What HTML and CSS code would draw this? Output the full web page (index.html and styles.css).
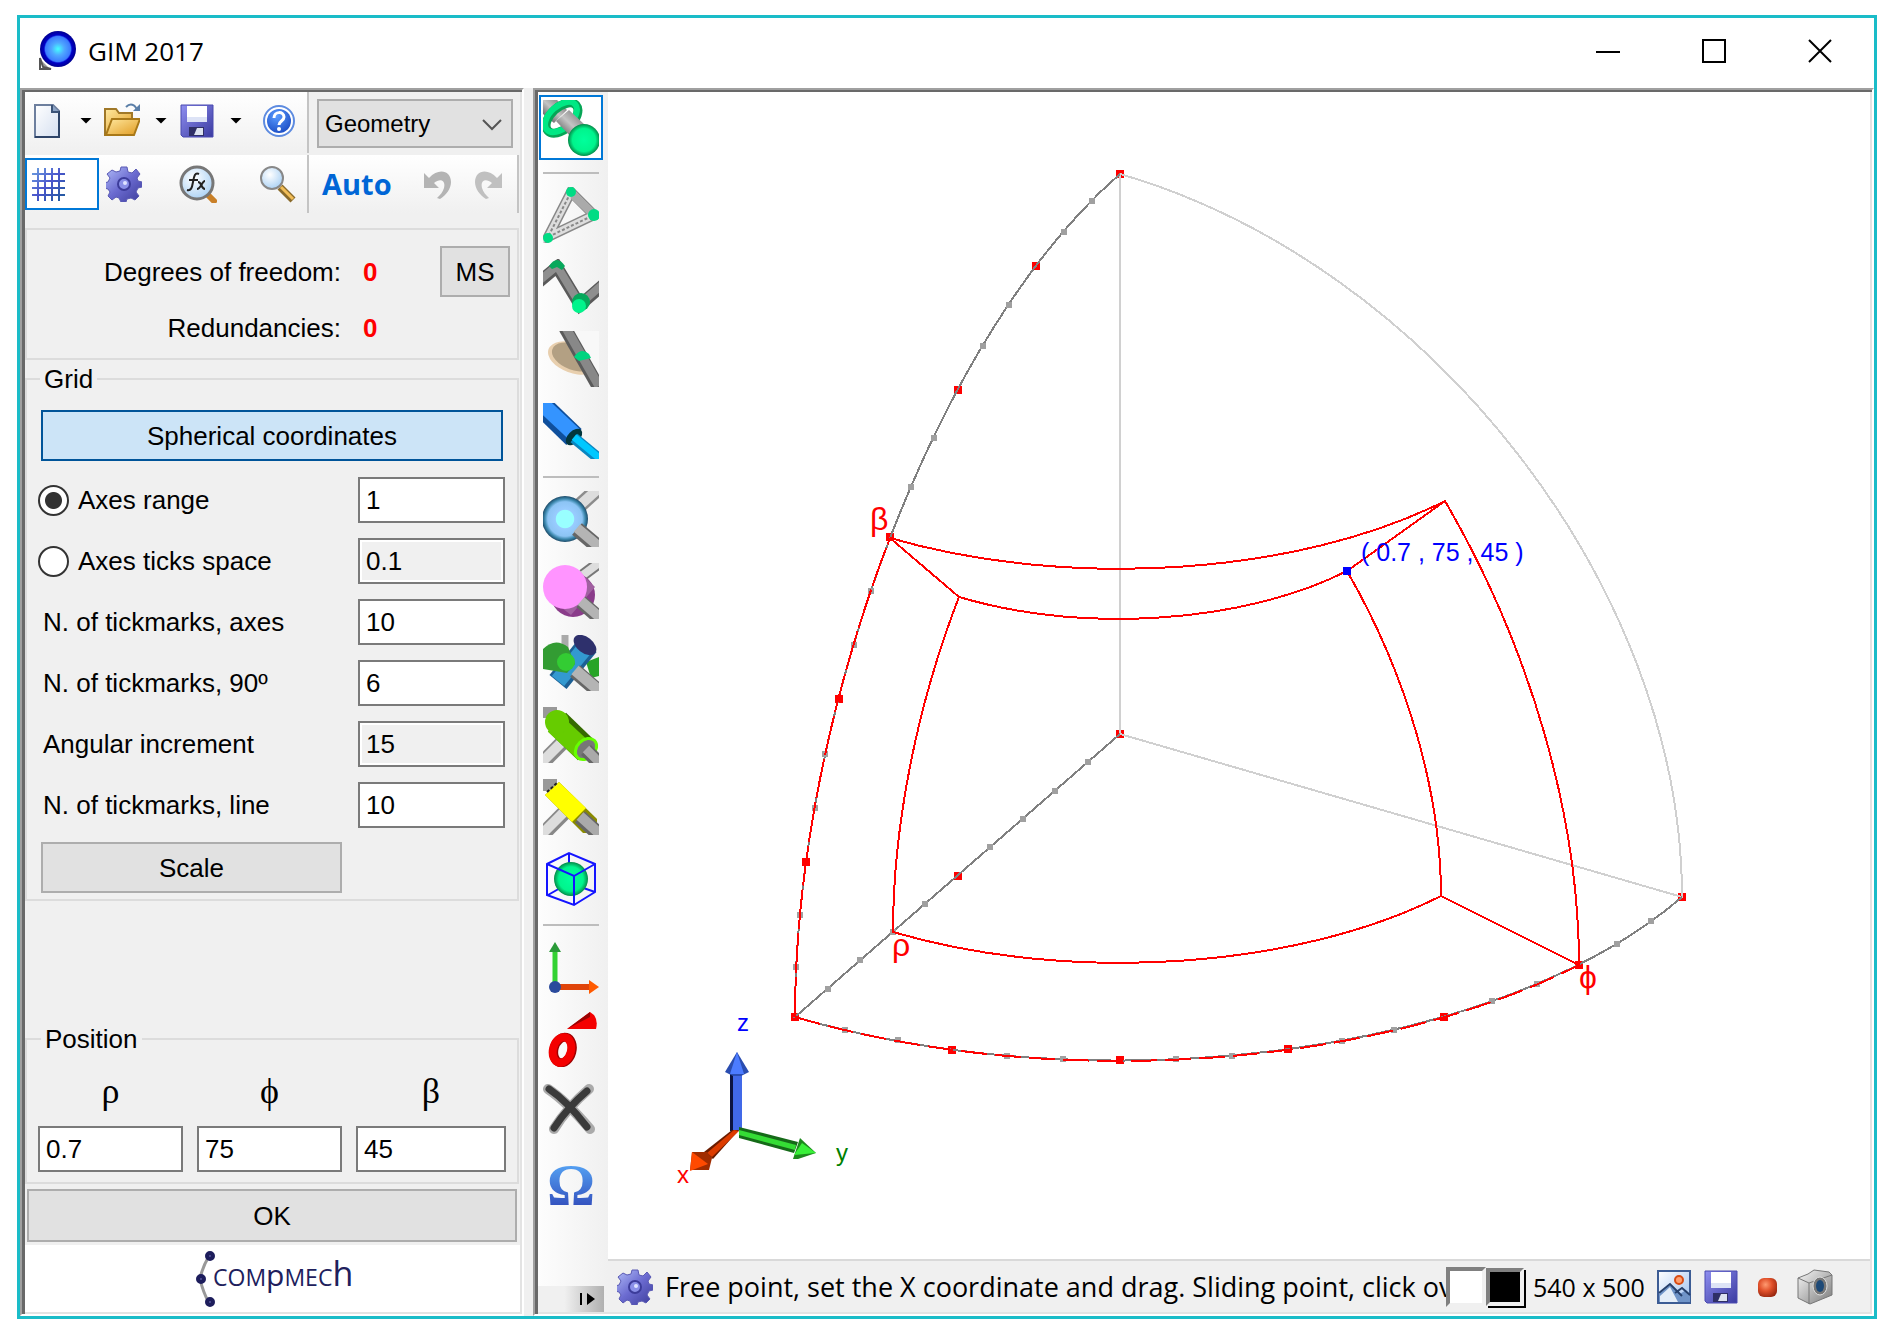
FILE: index.html
```html
<!DOCTYPE html>
<html lang="en">
<head>
<meta charset="utf-8">
<title>GIM 2017</title>
<link rel="stylesheet" href="styles.css">
</head>
<body>
<svg class="defs" aria-hidden="true">
  <defs>
    <linearGradient id="rod" gradientUnits="objectBoundingBox" x1="0.2" y1="0.8" x2="0.8" y2="0.2"><stop offset="0" stop-color="#707070"/><stop offset=".5" stop-color="#c4c4c4"/><stop offset="1" stop-color="#8c8c8c"/></linearGradient>
    <linearGradient id="floppy" x1="0" y1="0" x2="1" y2="1"><stop offset="0" stop-color="#8f8ff0"/><stop offset="1" stop-color="#3a3aa0"/></linearGradient>
    <linearGradient id="folder" x1="0" y1="0" x2="1" y2="1"><stop offset="0" stop-color="#ffe9a0"/><stop offset="1" stop-color="#e09a20"/></linearGradient>
    <linearGradient id="paper" x1="0" y1="0" x2="1" y2="1"><stop offset="0" stop-color="#fff"/><stop offset="1" stop-color="#d5dff0"/></linearGradient>
    <linearGradient id="gearfill" x1="0" y1="0" x2="1" y2="1"><stop offset="0" stop-color="#b4c0fa"/><stop offset=".5" stop-color="#6b6bd0"/><stop offset="1" stop-color="#3c3c9a"/></linearGradient>
    <linearGradient id="gridline" gradientUnits="userSpaceOnUse" x1="2" y1="2" x2="34" y2="34"><stop offset="0" stop-color="#6da3e0"/><stop offset=".5" stop-color="#4a55cc"/><stop offset="1" stop-color="#1f5a9c"/></linearGradient>
    <radialGradient id="lens" cx=".4" cy=".35" r=".7"><stop offset="0" stop-color="#fff"/><stop offset="1" stop-color="#a8d0f4"/></radialGradient>
    <radialGradient id="help" cx=".4" cy=".3" r=".8"><stop offset="0" stop-color="#5b9cff"/><stop offset="1" stop-color="#1747c0"/></radialGradient>
    <radialGradient id="app"><stop offset="0" stop-color="#4ff"/><stop offset=".35" stop-color="#4fa8ff"/><stop offset=".7" stop-color="#3c7cff"/><stop offset=".78" stop-color="#0000c8"/><stop offset="1" stop-color="#000090"/></radialGradient>
    <radialGradient id="green"><stop offset="0" stop-color="#00ff9c"/><stop offset=".72" stop-color="#00f48c"/><stop offset="1" stop-color="#048a48"/></radialGradient>
    <radialGradient id="sky"><stop offset="0" stop-color="#9ff"/><stop offset=".38" stop-color="#9ff"/><stop offset=".42" stop-color="#9cf"/><stop offset=".75" stop-color="#8cc4f4"/><stop offset=".88" stop-color="#3b87ac"/><stop offset="1" stop-color="#1d4a68"/></radialGradient>
    <radialGradient id="ball" cx=".4" cy=".35" r=".7"><stop offset="0" stop-color="#ff9a70"/><stop offset=".5" stop-color="#e0502a"/><stop offset="1" stop-color="#9a2810"/></radialGradient>
    <linearGradient id="picture" x1="0" y1="0" x2="1" y2="1"><stop offset="0" stop-color="#fff"/><stop offset="1" stop-color="#9cc0f0"/></linearGradient>
    <linearGradient id="camera" x1="0" y1="0" x2="1" y2="1"><stop offset="0" stop-color="#f8f8f8"/><stop offset="1" stop-color="#7a7a7a"/></linearGradient>
    <symbol id="gear" viewBox="0 0 36 36">
      <path fill="url(#gearfill)" stroke="#5a5ab4" d="M15 1h6l1 5 4 1 4-4 4 5-3 4 1 3 4 1v5l-4 1-2 4 3 4-4 4-4-2-4 1-1 3h-5l-2-4-3-1-4 3-4-4 2-4-2-3-4-1v-5l4-1 2-4-3-4 5-4 4 2 4-1z"/>
      <circle cx="18" cy="18" r="6" fill="#8a90e8" stroke="#3c3c9a" stroke-width="2"/><circle cx="19" cy="17" r="2" fill="#dfe4ff"/>
    </symbol>
    <symbol id="save" viewBox="0 0 36 36">
      <path fill="url(#floppy)" stroke="#4a4ab0" d="M2 2h32v32H4l-2-2z"/><path fill="#fff" d="M8 3h20v16H8z"/><path fill="#dde3f6" d="M8 14h20v5H8z"/><path fill="#2f2f66" d="M10 24h15v9H10z"/><path fill="#dde3f0" d="M18 25h6v7h-9z"/>
    </symbol>
  </defs>
</svg>

<main class="window">
  <header class="titlebar">
    <svg class="app-icon" viewBox="0 0 40 40"><path d="M1 27v12h12z" fill="#999"/><path d="M2 27v11h11l-8-2z" fill="#fff" stroke="#555" stroke-width="2"/><circle cx="20" cy="18" r="18" fill="url(#app)"/></svg>
    <h1 class="title">GIM 2017</h1>
    <div class="window-controls">
      <button type="button" aria-label="Minimize"><svg viewBox="0 0 24 24"><path d="M0 13h24" stroke="#000" stroke-width="2"/></svg></button>
      <button type="button" aria-label="Maximize"><svg viewBox="0 0 24 24"><path d="M1 1h22v22H1z" fill="none" stroke="#000" stroke-width="2"/></svg></button>
      <button type="button" aria-label="Close"><svg viewBox="0 0 24 24"><path d="M1 1l22 22M23 1L1 23" stroke="#000" stroke-width="2"/></svg></button>
    </div>
  </header>

  <div class="workspace">
    <aside class="sidebar sunken">
      <div class="toolrow">
        <div class="strip strip-main">
          <button class="tool" type="button" aria-label="New"><svg viewBox="0 0 36 36"><path d="M6 2h18l6 6v26H6z" fill="url(#paper)" stroke="#6d7f9e" stroke-width="2"/><path d="M30 8v26H6" fill="none" stroke="#2e4468" stroke-width="2"/><path d="M23 2v7h7" fill="#8ba3c6" stroke="#3c5478" stroke-width="2"/></svg></button>
          <button class="caret" type="button" aria-label="New options"></button>
          <button class="tool" type="button" aria-label="Open"><svg viewBox="0 0 36 36"><path d="M1 6h11l3 4h13v22H1z" fill="url(#folder)" stroke="#a07828" stroke-width="2"/><path d="M8 16h28l-6 16H2z" fill="url(#folder)" stroke="#a87818" stroke-width="2"/><path d="M22 4c4-4 9-3 11 3" fill="none" stroke="#5b7fa8" stroke-width="2"/><path d="M29 8h7V1z" fill="#5b7fa8"/></svg></button>
          <button class="caret" type="button" aria-label="Open options"></button>
          <button class="tool" type="button" aria-label="Save"><svg viewBox="0 0 36 36"><use href="#save"/></svg></button>
          <button class="caret" type="button" aria-label="Save options"></button>
          <button class="tool tool-help" type="button" aria-label="Help"><svg viewBox="0 0 36 36"><circle cx="18" cy="18" r="15" fill="#fff" stroke="#5d8be0" stroke-width="2"/><circle cx="18" cy="18" r="12" fill="url(#help)"/><path d="M13 15c0-7 10-7 10-1 0 4-5 4-5 8" fill="none" stroke="#fff" stroke-width="3"/><circle cx="18" cy="26" r="2" fill="#fff"/></svg></button>
        </div>
        <div class="combo">
          <select aria-label="Mode"><option>Geometry</option></select>
          <svg class="chevron" viewBox="0 0 20 12"><path d="M1 1l9 9 9-9" fill="none" stroke="#555" stroke-width="2"/></svg>
        </div>
      </div>
      <div class="toolrow toolrow-second">
        <div class="strip strip-main">
          <button class="tool grid-toggle" type="button" aria-label="Grid" aria-pressed="true"><svg viewBox="0 0 36 36"><path d="M8 2v33M15 2v33M22 2v33M29 2v33M2 8h33M2 15h33M2 22h33M2 29h33" stroke="url(#gridline)" stroke-width="2"/></svg></button>
          <button class="tool tool-gear" type="button" aria-label="Settings"><svg viewBox="0 0 36 36"><use href="#gear"/></svg></button>
          <button class="tool tool-fx" type="button" aria-label="Functions"><svg viewBox="0 0 38 38"><path d="M28 29l7 7" stroke="#c98028" stroke-width="6" stroke-linecap="round"/><circle cx="18" cy="18" r="16" fill="url(#lens)" stroke="#777" stroke-width="3"/><path d="M20 9c-4-2-5 2-6 8s-2 9-6 8M10 15h9M19 17c4 0 3 7 7 7M26 16c-3 0-4 8-8 8" fill="none" stroke="#222" stroke-width="2"/></svg></button>
          <button class="tool tool-zoom" type="button" aria-label="Zoom"><svg viewBox="0 0 38 38"><path d="M22 22l13 13" stroke="#8a6a2a" stroke-width="7"/><path d="M23 22l12 12" stroke="#f2bd58" stroke-width="3"/><circle cx="14" cy="13" r="11" fill="url(#lens)" stroke="#888" stroke-width="2"/></svg></button>
        </div>
        <div class="strip strip-edit">
          <button class="auto" type="button">Auto</button>
          <button class="tool" type="button" aria-label="Undo" disabled><svg viewBox="0 0 32 32"><path d="M2 5v15h15l-5-5c6-5 12-3 10 5-1 4-4 7-7 10l3 1c6-4 11-10 11-17C29 3 17-1 7 10z" fill="#b4b4b4"/></svg></button>
          <button class="tool" type="button" aria-label="Redo" disabled><svg viewBox="0 0 32 32"><path d="M30 5v15H15l5-5c-6-5-12-3-10 5 1 4 4 7 7 10l-3 1C8 27 3 21 3 14 3 3 15-1 25 10z" fill="#c0c0c0"/></svg></button>
        </div>
      </div>

      <section class="stats">
        <div class="stat"><span class="stat-name">Degrees of freedom:</span><output class="stat-value">0</output><button class="push ms" type="button">MS</button></div>
        <div class="stat"><span class="stat-name">Redundancies:</span><output class="stat-value">0</output></div>
      </section>

      <fieldset class="group grid-group">
        <legend>Grid</legend>
        <button class="push push-active" type="button" aria-pressed="true">Spherical coordinates</button>
        <div class="rows">
          <div class="row"><label class="choice"><input type="radio" name="axes" checked>Axes range</label><input class="field" type="text" value="1" aria-label="Axes range value"></div>
          <div class="row"><label class="choice"><input type="radio" name="axes">Axes ticks space</label><input class="field" type="text" value="0.1" readonly aria-label="Axes ticks space value"></div>
          <div class="row"><label class="name" for="t-axes">N. of tickmarks, axes</label><input class="field" id="t-axes" type="text" value="10"></div>
          <div class="row"><label class="name" for="t-90">N. of tickmarks, 90º</label><input class="field" id="t-90" type="text" value="6"></div>
          <div class="row"><label class="name" for="t-ang">Angular increment</label><input class="field" id="t-ang" type="text" value="15" readonly></div>
          <div class="row"><label class="name" for="t-line">N. of tickmarks, line</label><input class="field" id="t-line" type="text" value="10"></div>
        </div>
        <button class="push scale" type="button">Scale</button>
      </fieldset>

      <fieldset class="group position-group">
        <legend>Position</legend>
        <div class="coords">
          <label>ρ<input class="field" type="text" value="0.7"></label>
          <label>ϕ<input class="field" type="text" value="75"></label>
          <label>β<input class="field" type="text" value="45"></label>
        </div>
      </fieldset>
      <button class="push ok" type="button">OK</button>
      <div class="brand">
        <svg viewBox="0 0 24 58"><path d="M16 6Q9 18 7 29Q10 42 16 53" fill="none" stroke="#999" stroke-width="3"/><g fill="#55559a" stroke="#1d1d5c" stroke-width="4"><circle cx="17" cy="6" r="3"/><circle cx="8" cy="29" r="3"/><circle cx="17" cy="52" r="3"/></g></svg>
        <span class="brand-name">COM<span class="brand-p">p</span>MEC<span class="brand-h">h</span></span>
      </div>
    </aside>

    <section class="stage sunken">
      <nav class="palette" aria-label="Elements">
        <button class="selected" type="button" aria-label="Node"><svg viewBox="0 0 56 56"><path d="M0 0h14l10 10-13 13L0 14z" fill="url(#rod)"/><ellipse cx="19" cy="18" rx="19" ry="11" transform="rotate(-42 19 18)" fill="none" stroke="#06a556" stroke-width="9"/><ellipse cx="18" cy="17" rx="19" ry="11" transform="rotate(-42 18 17)" fill="none" stroke="#00e884" stroke-width="6"/><path d="M13 21l13-11 16 15-13 13z" fill="url(#rod)"/><circle cx="41" cy="40" r="16" fill="url(#green)"/></svg></button>
        <hr>
        <button type="button" aria-label="Ternary element"><svg viewBox="0 0 56 56"><path d="M28 5l23 23L5 50z" fill="none" stroke="#888" stroke-width="10"/><path d="M28 5l23 23L5 50z" fill="none" stroke="#ddd" stroke-width="7"/><path d="M28 5l23 23L5 50z" fill="none" stroke="#888" stroke-width="2" stroke-dasharray="3 2"/><path d="M30 8l19 18" stroke="#aaa" stroke-width="8"/><circle cx="28" cy="5" r="5" fill="#00dc84"/><circle cx="51" cy="28" r="6" fill="#00dc84"/><circle cx="5" cy="51" r="5" fill="#00dc84"/></svg></button>
        <button type="button" aria-label="Binary element"><svg viewBox="0 0 56 56"><path d="M-4 23L14 8l23 38 23-20" fill="none" stroke="#5a5a5a" stroke-width="12"/><path d="M-4 22L14 7l23 38 23-20" fill="none" stroke="#8e8e8e" stroke-width="8"/><path d="M6 7q8-12 16 0l-3 4-5-3-5 2z" fill="#07a85c"/><circle cx="38" cy="43" r="9" fill="#07a85c"/><circle cx="36" cy="47" r="7" fill="#00f48c"/></svg></button>
        <button type="button" aria-label="Disc element"><svg viewBox="0 0 56 56"><ellipse cx="30" cy="27" rx="26" ry="15" transform="rotate(20 30 27)" fill="#e8cfae"/><ellipse cx="31" cy="26" rx="23" ry="13" transform="rotate(20 31 26)" fill="#b3a083"/><path d="M26 0h30v46z" fill="#f8f8f8"/><path d="M22 -3l34 60" stroke="#5a5a5a" stroke-width="13"/><path d="M23 -3l33 58" stroke="#888" stroke-width="9"/><path d="M31 26q7-10 15-3l2 4-12 3z" fill="#00d480"/></svg></button>
        <button type="button" aria-label="Actuator"><svg viewBox="0 0 56 56"><path d="M-2 2l33 32" stroke="#0f4f9c" stroke-width="22"/><path d="M-2 0l33 31" stroke="#3494ff" stroke-width="15"/><ellipse cx="31" cy="34" rx="10" ry="6" transform="rotate(-45 31 34)" fill="#03363c"/><path d="M31 35l29 24" stroke="#0a86c0" stroke-width="11"/><path d="M31 34l29 24" stroke="#00c8ff" stroke-width="7"/></svg></button>
        <hr>
        <button type="button" aria-label="Spherical joint"><svg viewBox="0 0 56 56"><path d="M56 -3L36 15" stroke="#8c8c8c" stroke-width="15"/><path d="M56 -3L36 15" stroke="#ddd" stroke-width="10"/><circle cx="22" cy="28" r="23" fill="url(#sky)"/><path d="M34 38l26 22" stroke="#666" stroke-width="15"/><path d="M34 37l26 22" stroke="#b4b4b4" stroke-width="10"/></svg></button>
        <button type="button" aria-label="Planar joint"><svg viewBox="0 0 56 56"><path d="M56 0L40 12" stroke="#777" stroke-width="12"/><path d="M56 0L40 12" stroke="#ddd" stroke-width="8"/><circle cx="30" cy="32" r="22" fill="#8a3c8a"/><path d="M10 38l28-28 14 14-24 28z" fill="#a060a0"/><circle cx="22" cy="24" r="22" fill="#ff94ff"/><path d="M38 39l22 19" stroke="#666" stroke-width="14"/><path d="M38 38l22 19" stroke="#b4b4b4" stroke-width="10"/></svg></button>
        <button type="button" aria-label="Universal joint"><svg viewBox="0 0 56 56"><path d="M22 0v14" stroke="#aaa" stroke-width="7"/><path d="M43 27l13-5v19l-8 2z" fill="#28a428"/><path d="M45 10L15 47" stroke="#1c5f94" stroke-width="22"/><path d="M42 13L15 46" stroke="#3399d0" stroke-width="16"/><ellipse cx="42" cy="10" rx="13" ry="8" transform="rotate(38 42 10)" fill="#2e306c"/><path d="M0 14q12-12 25-2l7 17-8 9-24-4z" fill="#339c33"/><circle cx="23" cy="27" r="9" fill="#33cc33"/><path d="M32 36l28 24" stroke="#666" stroke-width="15"/><path d="M32 35l28 24" stroke="#b4b4b4" stroke-width="11"/></svg></button>
        <button type="button" aria-label="Cylindrical joint"><svg viewBox="0 0 56 56"><path d="M-2 4h16" stroke="#999" stroke-width="14"/><path d="M-3 58l26-26" stroke="#888" stroke-width="15"/><path d="M-3 57l26-26" stroke="#ddd" stroke-width="10"/><path d="M14 15l30 29" stroke="#356b00" stroke-width="26"/><path d="M12 17l30 28" stroke="#66cc00" stroke-width="21"/><circle cx="14" cy="15" r="12" fill="#66cc00"/><ellipse cx="43" cy="42" rx="12" ry="9" transform="rotate(-45 43 42)" fill="#777" stroke="#66ff00" stroke-width="3"/><path d="M43 43l16 16" stroke="#666" stroke-width="14"/><path d="M43 42l16 16" stroke="#aaa" stroke-width="9"/></svg></button>
        <button type="button" aria-label="Prismatic joint"><svg viewBox="0 0 56 56"><path d="M-2 5h16" stroke="#999" stroke-width="14"/><path d="M-3 58l26-26" stroke="#888" stroke-width="15"/><path d="M-3 57l26-26" stroke="#ddd" stroke-width="10"/><path d="M16 3l38 37v14H40L2 16z" fill="#8a8a00"/><path d="M16 3l27 26-14 14L2 16z" fill="#ff0"/><path d="M4 13L15 3" stroke="#222" stroke-width="2" stroke-dasharray="3 2"/><path d="M37 38l22 20" stroke="#666" stroke-width="15"/><path d="M37 37l22 20" stroke="#aaa" stroke-width="10"/></svg></button>
        <button type="button" aria-label="Fixed node"><svg viewBox="0 0 56 56"><path d="M26 2v30L5 44M26 32l26 9" fill="none" stroke="#1414ff" stroke-width="2"/><circle cx="28" cy="28" r="17" fill="url(#green)"/><path d="M4 13L26 2l26 11v28L31 54 4 44zM4 13l27 12 21-12M31 25v29" fill="none" stroke="#1414ff" stroke-width="2"/></svg></button>
        <hr>
        <button type="button" aria-label="Axes"><svg viewBox="0 0 56 56"><path d="M12 8v36" stroke="#32d232" stroke-width="5"/><path d="M12 3l6 10H6z" fill="#2a9a38"/><path d="M12 48h36" stroke="#e0440a" stroke-width="6"/><path d="M46 41l10 7-10 7z" fill="#ff5a00"/><circle cx="12" cy="48" r="6" fill="#2a4a9c"/></svg></button>
        <button type="button" aria-label="Trace"><svg viewBox="0 0 56 56"><ellipse cx="20" cy="39" rx="9" ry="13" transform="rotate(15 20 39)" fill="none" stroke="#a00000" stroke-width="9"/><ellipse cx="19" cy="39" rx="9" ry="13" transform="rotate(15 19 39)" fill="none" stroke="#f40000" stroke-width="8"/><path d="M24 18L47 1q9 5 6 17z" fill="#f40000"/><path d="M24 18L47 1v5z" fill="#900"/></svg></button>
        <button type="button" aria-label="Delete"><svg viewBox="0 0 56 56"><path d="M5 6q18 12 42 40M46 6Q24 25 11 46" fill="none" stroke="#aaa" stroke-width="10" stroke-linecap="round"/><path d="M6 6q18 12 38 38M44 8Q24 25 11 45" fill="none" stroke="#3a3a3a" stroke-width="7" stroke-linecap="round"/></svg></button>
        <button class="omega" type="button">Ω</button>
        <button class="overflow" type="button" aria-label="More elements"><svg viewBox="0 0 16 12"><path d="M0 0h2v12H0zM7 0l8 6-8 6z"/></svg></button>
      </nav>

      <div class="viewport">
        <svg class="scene" viewBox="608 92 1262 1167" role="img" aria-label="Spherical coordinate grid">
          <g fill="none" stroke-width="2" shape-rendering="crispEdges">
            <path class="ticks-red" d="M1120 174h0M1120 734h0M795 1017h0M1682 897h0M958 876h0M806 862h0M839 699h0M890 537h0M958 390h0M1036 266h0M952 1050h0M1120 1060h0M1288 1049h0M1444 1017h0M1579 965h0"/>
            <path stroke="#d0d0d0" d="M1120 174V734L1682 897C1682 588 1430 264 1120 174"/>
            <path stroke="#808080" d="M1120 734L795 1017C1105 1107 1502 1053 1682 897M795 1017C795 708 940 330 1120 174"/>
            <path class="ticks-gray" d="M1088 762h0M1055 791h0M1023 819h0M990 847h0M925 904h0M893 932h0M860 960h0M828 989h0M796 967h0M800 915h0M815 808h0M825 754h0M854 645h0M871 591h0M911 487h0M934 438h0M983 346h0M1009 305h0M1064 232h0M1092 201h0M845 1030h0M898 1040h0M1007 1056h0M1063 1059h0M1176 1059h0M1232 1056h0M1342 1041h0M1394 1030h0M1492 1001h0M1537 984h0M1617 944h0M1651 921h0"/>
            <path stroke="#f00" stroke-dasharray="26 8" d="M795 1017C1049 1091 1371 1070 1579 965"/>
            <path stroke="#f00" stroke-dasharray="40 4" d="M795 1017C795 868 829 696 890 538"/>
            <path stroke="#f00" d="M890 538C1070 590 1298 575 1445 501C1531 649 1579 817 1579 965L1441 896C1296 969 1070 984 893 932C893 828 916 708 959 597C1085 634 1244 623 1347 571C1407 675 1441 792 1441 896M890 538L959 597M1347 571L1445 501"/>
            <path class="tick-blue" d="M1347 571h0"/>
          </g>
          <g class="mark mark-red"><text x="870" y="530">β</text><text x="892" y="956">ρ</text><text x="1579" y="988">ϕ</text></g>
          <text class="mark mark-blue" x="1361" y="561">( 0.7 , 75 , 45 )</text>
          <path d="M730 1074h12v57h-12z" fill="#4169e8"/><path d="M730 1074h3v57h-3z" fill="#0c1440"/><path d="M737 1052l12 20-8 4h-8l-8-4z" fill="#2a4db0"/><path d="M737 1052l7 22h-14z" fill="#4c7cff"/>
          <path d="M739 1127l59 15-4 11-55-15z" fill="#156a18"/><path d="M739 1130l57 15-1 5-56-15z" fill="#35dc35"/><path d="M800 1138l16 15-18 6h-5z" fill="#1c8a1c"/><path d="M802 1143l14 10-22 2z" fill="#38f038"/>
          <path d="M739 1130l-26 29-9-7 28-22z" fill="#6a1c00"/><path d="M739 1131l-27 26-5-4 27-23z" fill="#dc3c00"/><path d="M692 1152h15l5 6-3 12h-19z" fill="#a02c00"/><path d="M692 1152l16 12-18 7z" fill="#ff4a00"/>
          <g class="axis"><text x="737" y="1031" fill="#00f">z</text><text x="677" y="1183" fill="#f00">x</text><text x="836" y="1161" fill="#008000">y</text></g>
        </svg>
        <footer class="status">
          <svg class="status-icon" viewBox="0 0 36 36"><use href="#gear"/></svg>
          <p class="hint">Free point, set the X coordinate and drag. Sliding point, click over</p>
          <button class="swatch swatch-white" type="button" aria-label="Background colour"></button>
          <button class="swatch swatch-black" type="button" aria-label="Line colour"></button>
          <span class="size">540 x 500</span>
          <button class="tool" type="button" aria-label="Image"><svg viewBox="0 0 36 36"><path d="M2 2h32v32H2z" fill="url(#picture)" stroke="#3c5c94" stroke-width="2"/><path d="M3 25l11-9 10 9 6-4 4 6v6H3z" fill="#6f94c8"/><path d="M3 24l11-9 12 12M19 24l7-5 8 7" fill="none" stroke="#26406c" stroke-width="2"/><path d="M4 27l10-9 8 15H4z" fill="#e4edf8"/><circle cx="23" cy="11" r="4" fill="#ffa070" stroke="#d84c14" stroke-width="2"/></svg></button>
          <button class="tool" type="button" aria-label="Save image"><svg viewBox="0 0 36 36"><use href="#save"/></svg></button>
          <button class="tool" type="button" aria-label="Record"><svg viewBox="0 0 36 36"><rect x="8" y="9" width="19" height="19" rx="6" fill="url(#ball)"/></svg></button>
          <button class="tool" type="button" aria-label="Snapshot"><svg viewBox="0 0 36 36"><path d="M1 9l10-4 6-4 15 2 3 3v20L13 35 1 29z" fill="url(#camera)" stroke="#777"/><path d="M1 9l11 5 23-8M12 14v21" fill="none" stroke="#777"/><ellipse cx="23" cy="17" rx="7" ry="9" fill="#777" stroke="#ddd"/><ellipse cx="23" cy="17" rx="4" ry="6" fill="#1e4a78"/></svg></button>
        </footer>
      </div>
    </section>
  </div>
</main>
</body>
</html>
```
FILE: styles.css
```css
* { box-sizing: border-box; }

body {
  margin: 0;
  padding: 15px 13px 17px 17px;
  min-height: 100vh;
  display: flex;
  background: #fff;
  color: #000;
  font: 26px/30px "Liberation Sans", Arial, sans-serif;
}

.defs { position: absolute; width: 0; height: 0; }
svg { display: block; }

button {
  margin: 0;
  padding: 0;
  border: 0;
  background: none;
  color: inherit;
  font: inherit;
}

.window {
  flex: 1;
  min-width: 0;
  display: flex;
  flex-direction: column;
  border: 3px solid #1abcc8;
}

.titlebar {
  flex: none;
  height: 70px;
  display: flex;
  align-items: center;
  padding: 0 42px 4px 18px;
  font-family: "Open Sans", "Noto Sans", sans-serif;
}
.app-icon { width: 40px; height: 40px; }
.title { margin: 0 auto 0 10px; font-size: 26px; font-weight: 400; }
.window-controls { display: flex; gap: 82px; }
.window-controls svg { width: 24px; height: 24px; }

.workspace { flex: 1; display: flex; gap: 9px; background: #f0f0f0; }

.sunken {
  border: 2px solid;
  border-color: #a0a0a0 #fff #fff #a0a0a0;
  box-shadow: inset 3px 2px #696969, inset -2px -2px #e3e3e3;
  padding: 2px 2px 2px 3px;
}

.sidebar {
  flex: none;
  width: 504px;
  display: flex;
  flex-direction: column;
  background: #f0f0f0;
}

/* toolbars */
.toolrow { display: flex; height: 61px; }
.toolrow-second { height: 58px; margin-top: 2px; }
.strip {
  display: flex;
  align-items: center;
  background: linear-gradient(#fff, #f0f0f0);
  border-right: 2px solid #c4c4c4;
}
.strip-main { width: 284px; }
.toolrow:first-child .strip-main { padding: 0 0 4px 4px; }
.tool { flex: none; display: flex; justify-content: center; align-items: center; }
.tool svg { width: 36px; height: 36px; }
.caret {
  flex: none;
  width: 12px;
  height: 6px;
  margin: 0 12px 0 15px;
  background: #000;
  clip-path: polygon(0 0, 100% 0, 50% 100%);
}
.tool-help { margin-left: 7px; }
.combo { position: relative; margin: 7px 0 0 8px; width: 196px; height: 49px; }
.combo select {
  appearance: none;
  width: 100%;
  height: 100%;
  padding: 0 6px;
  border: 2px solid #adadad;
  border-radius: 0;
  background: #e1e1e1;
  color: #000;
  font: 24px/30px "Liberation Sans", Arial, sans-serif;
}
.chevron { position: absolute; right: 11px; top: 20px; width: 20px; height: 12px; pointer-events: none; }

.grid-toggle {
  width: 74px;
  height: 52px;
  justify-content: flex-start;
  padding-left: 3px;
  border: 2px solid #0078d7;
  background: #fff;
}
.tool-gear { width: 50px; }
.tool-fx { width: 98px; }
.tool-zoom { width: 60px; }
.tool-fx svg, .tool-zoom svg { width: 38px; height: 38px; }
.strip-edit { width: 210px; padding-left: 13px; }
.auto { color: #0066d6; font: bold 29px/34px "Open Sans", sans-serif; width: 100px; text-align: left; }
.strip-edit svg { width: 32px; height: 32px; }
.strip-edit .tool + .tool { margin-left: 18px; }

/* buttons and fields */
.push { border: 2px solid #adadad; background: #e1e1e1; }
.field {
  width: 147px;
  height: 46px;
  padding: 0 6px;
  border: 2px solid #7a7a7a;
  border-radius: 0;
  background: #fff;
  color: #000;
  font: 26px/30px "Liberation Sans", Arial, sans-serif;
}
.field:read-only { background: #f0f0f0; box-shadow: inset 0 0 0 2px #fff; }

.stats {
  margin: 15px 1px 0 0;
  height: 132px;
  padding-top: 16px;
  border: 2px solid #dcdcdc;
}
.stat { display: flex; align-items: center; height: 51px; }
.stat + .stat { margin-top: 5px; }
.stat-name { width: 314px; text-align: right; }
.stat-value { width: 99px; padding-left: 22px; color: #f00; font-weight: bold; }
.ms { width: 70px; height: 51px; }

.group { margin: 0 1px 0 0; min-width: 0; padding: 0; border: 2px solid #dcdcdc; }
.group legend { padding: 0 4px; }
.grid-group { margin-top: 4px; padding: 16px 12px 6px 11px; }
.grid-group legend { margin-left: 2px; }
.push-active {
  display: block;
  width: 462px;
  height: 51px;
  margin-left: 3px;
  border-color: #005499;
  background: #cce4f7;
}
.rows { display: grid; gap: 15px; margin: 16px 0 14px; }
.row { display: flex; justify-content: space-between; align-items: center; }
.name { padding-left: 5px; }
.choice { display: flex; align-items: center; gap: 9px; }
.choice input {
  appearance: none;
  width: 31px;
  height: 31px;
  margin: 0;
  border: 2px solid #333;
  border-radius: 50%;
  background: #fff;
}
.choice input:checked { background: radial-gradient(circle, #333 8px, #fff 9px); }
.scale { display: block; width: 301px; height: 51px; margin-left: 3px; }

.position-group { margin-top: auto; padding: 17px 13px 10px 11px; }
.position-group legend { margin-left: 3px; }
.coords { display: grid; grid-template-columns: 145px 145px 150px; gap: 14px; }
.coords label {
  display: grid;
  gap: 15px;
  text-align: center;
  font: 36px/40px "Liberation Serif", serif;
}
.coords .field { width: 100%; }
.ok { height: 53px; margin: 5px 3px 3px 2px; }
.brand {
  height: 67px;
  display: flex;
  align-items: center;
  padding-left: 168px;
  background: #fff;
  color: #20205c;
}
.brand svg { width: 24px; height: 58px; }
.brand-name { padding-bottom: 8px; margin-left: -4px; font: 23px/40px "Open Sans", sans-serif; }
.brand-p { font-size: 30px; }
.brand-h { font-size: 34px; }

/* element palette */
.stage { flex: 1; min-width: 0; display: flex; background: #fff; }
.palette {
  flex: none;
  width: 70px;
  padding: 3px 4px 0 0;
  display: flex;
  flex-direction: column;
  align-items: center;
  background: linear-gradient(90deg, #fdfdfd, #f0f0f0);
}
.palette button { flex: none; display: block; width: 56px; height: 56px; margin-bottom: 16px; }
.palette svg { width: 56px; height: 56px; overflow: hidden; }
.palette .selected { width: 64px; height: 65px; margin: 0; padding: 2px; border: 2px solid #0078d7; background: #fff; }
.palette hr { flex: none; width: 56px; height: 2px; margin: 1px 0 13px; border: 0; background: #bdbdbd; }
.palette .selected + hr { margin-top: 12px; }
.palette .omega {
  font: bold 60px/60px "Liberation Serif", serif;
  background: linear-gradient(#5cb4ff, #3048b8);
  background-clip: text;
  color: transparent;
}
.palette .overflow {
  width: 66px;
  height: 26px;
  margin: auto 0 0;
  padding: 7px 8px 7px 42px;
  background: linear-gradient(90deg, #f0f0f0 40%, #b0b0b0);
}
.palette .overflow svg { width: 16px; height: 12px; }

/* drawing area */
.viewport { flex: 1; min-width: 0; display: flex; flex-direction: column; }
.scene { flex: 1; width: 100%; min-height: 0; }
.ticks-red, .tick-blue { stroke: #f00; stroke-linecap: square; stroke-width: 8px; }
.tick-blue { stroke: #00f; }
.ticks-gray { stroke: #a0a0a0; stroke-linecap: square; stroke-width: 6px; }
.mark { font: 25px "Liberation Sans", sans-serif; }
.mark-red { fill: #f00; font-size: 32px; }
.mark-blue { fill: #00f; }
.axis { font: 24px "Liberation Sans", sans-serif; }

.status {
  flex: none;
  height: 53px;
  display: flex;
  align-items: center;
  padding: 0 37px 0 9px;
  border-top: 2px solid #d9d9d9;
  background: #f0f0f0;
  font: 25px/34px "Open Sans", "Noto Sans", sans-serif;
}
.status-icon { flex: none; width: 36px; height: 36px; margin-right: 12px; }
.hint { flex: 1; min-width: 0; margin: 0; overflow: hidden; white-space: nowrap; font-size: 27px; }
.swatch { flex: none; width: 40px; height: 40px; border: 4px solid; border-color: #808080 #f0f0f0 #f0f0f0 #808080; }
.swatch-white { background: #fff; }
.swatch-black { background: #000; box-shadow: 2px 2px #000; width: 38px; height: 38px; }
.size { flex: none; width: 123px; margin-left: 9px; }
.status .tool { margin-right: 11px; }
.status .tool:last-child { margin-right: 0; }
```
